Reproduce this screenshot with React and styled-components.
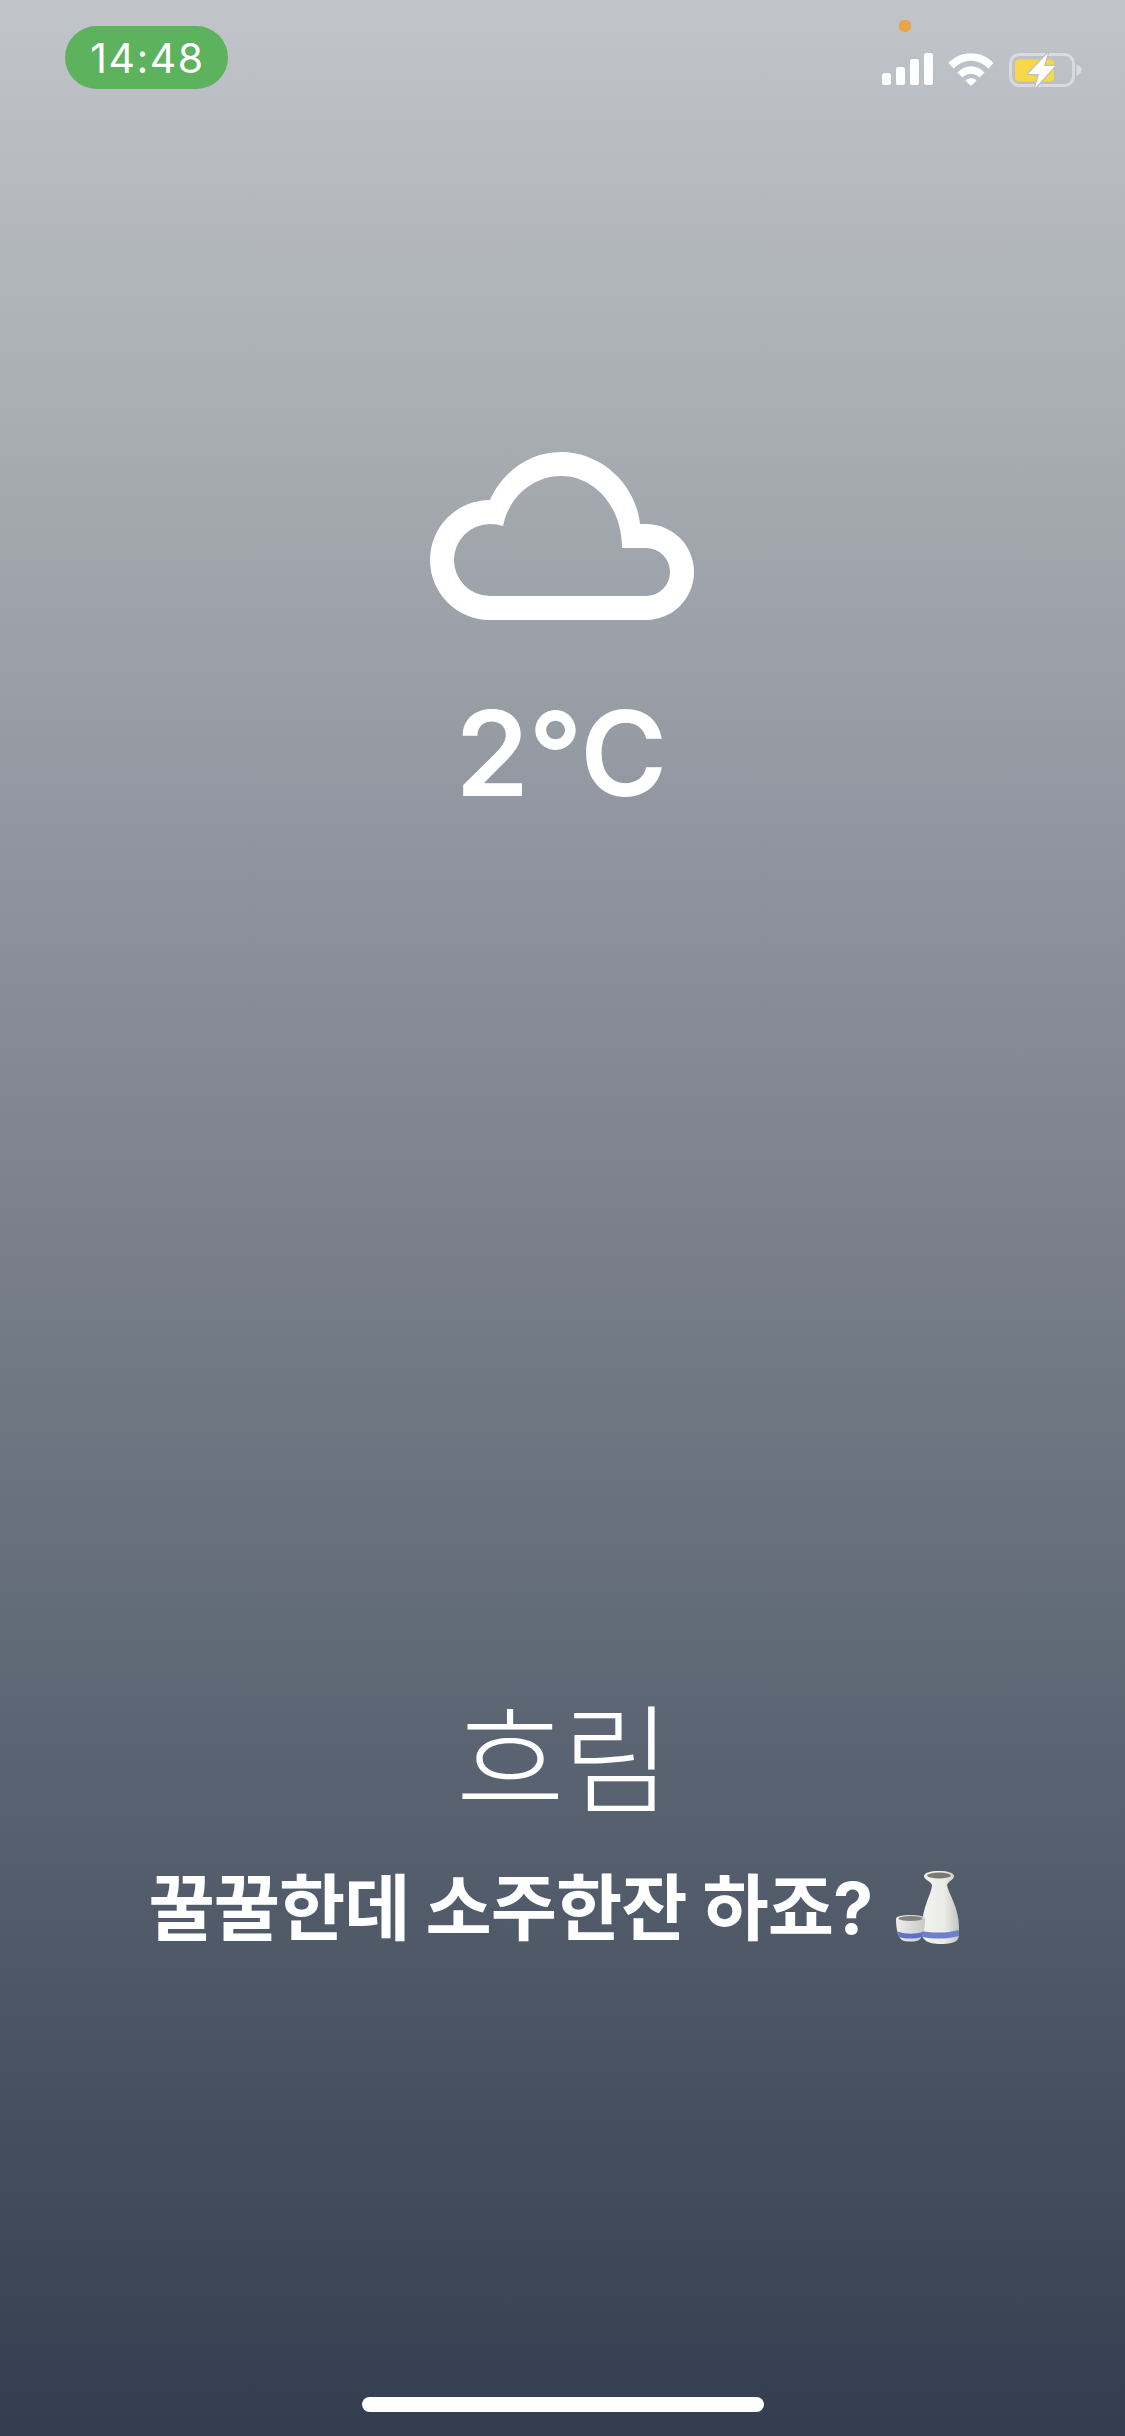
import React from 'react';
import styled, { createGlobalStyle } from 'styled-components';

const GlobalStyle = createGlobalStyle`
  html, body {
    margin: 0;
    padding: 0;
  }
  body {
    font-family: 'Inter', 'Noto Sans CJK KR', sans-serif;
  }
`;

const Screen = styled.div`
  width: 1125px;
  height: 2436px;
  overflow: hidden;
  display: flex;
  flex-direction: column;
  align-items: center;
  color: #fff;
  background: linear-gradient(180deg, #c1c4c9 0%, #323e4f 100%);
`;

const StatusBar = styled.div`
  align-self: stretch;
  height: 89px;
  padding: 26px 43px 0 65px;
  box-sizing: border-box;
  display: flex;
  justify-content: space-between;
  flex-shrink: 0;
`;

const TimePill = styled.div`
  width: 163px;
  height: 63px;
  padding-left: 2px;
  box-sizing: border-box;
  border-radius: 32px;
  background: #5cb25d;
  display: flex;
  align-items: center;
  justify-content: center;
  font-size: 41px;
  font-weight: 400;
  letter-spacing: 1.5px;
`;

const StatusIcons = styled.div`
  position: relative;
  display: flex;
  align-items: flex-start;
  gap: 15px;
  padding-top: 27px;
`;

const PrivacyDot = styled.span`
  position: absolute;
  left: 17px;
  top: -6px;
  width: 12px;
  height: 12px;
  border-radius: 5px;
  background: #e5a64a;
`;

const CloudIcon = styled.svg`
  display: block;
  margin-top: 363px;
  flex-shrink: 0;
`;

const Temperature = styled.div`
  margin-top: 62px;
  margin-right: 3px;
  font-size: 118px;
  line-height: 143px;
  font-weight: 600;
  letter-spacing: -0.5px;
`;

const Condition = styled.div`
  margin-top: 853px;
  font-family: 'Noto Sans CJK KR', sans-serif;
  font-size: 118px;
  line-height: 150px;
  font-weight: 300;
  letter-spacing: -2px;
`;

const Message = styled.div`
  margin-top: 30px;
  margin-right: 16px;
  display: flex;
  align-items: center;
  gap: 24px;
  font-family: 'Inter', 'Noto Sans CJK KR', sans-serif;
  font-size: 72px;
  line-height: 100px;
  font-weight: 700;
  letter-spacing: -1px;
`;

const HomeIndicator = styled.div`
  margin-top: auto;
  margin-bottom: 24px;
  width: 402px;
  height: 15px;
  border-radius: 8px;
  background: #fff;
  flex-shrink: 0;
`;

const SignalIcon = () => (
  <svg width="51" height="33" viewBox="0 0 51 33" fill="#fff">
    <rect x="0" y="20" width="9" height="12" rx="2.5" />
    <rect x="14" y="14" width="9" height="18" rx="2.5" />
    <rect x="28" y="6" width="9" height="26" rx="2.5" />
    <rect x="42" y="0" width="9" height="32" rx="2.5" />
  </svg>
);

const WifiIcon = () => (
  <svg width="46" height="33" viewBox="0 0 46 33" fill="#fff">
    <path d="M0.500 10C12.500 -3 33.500 -3 45.500 10L40.500 15.500C29.500 5 16.500 5 5.500 15.500Z" />
    <path d="M9.500 19.500C17.500 11 28.500 11 36.500 19.500L31.500 24.500C26.500 19.500 19.500 19.500 14.500 24.500Z" />
    <path d="M17.500 27.500C20.500 24 25.500 24 28.500 27.500L23 33Z" />
  </svg>
);

const BatteryIcon = () => (
  <svg width="73" height="36" viewBox="0 0 73 36" style={{ marginTop: -1 }}>
    <rect x="1.5" y="2.5" width="63" height="31" rx="9" fill="none" stroke="#fff" strokeOpacity="0.42" strokeWidth="3" />
    <path d="M67.500 12.500C71 13.500 72.500 15.500 72.500 18C72.500 20.500 71 22.500 67.500 23.500Z" fill="#fff" fillOpacity="0.45" />
    <rect x="6" y="7.500" width="39" height="22" rx="4" fill="#f8d748" />
    <path d="M39 1L19 22H30L26 36L46 14H35Z" fill="#fff" stroke="#bcc0c5" strokeWidth="2.500" strokeLinejoin="round" paintOrder="stroke" />
  </svg>
);

const SakeIcon = () => (
  <svg width="64" height="74" viewBox="0 0 64 74" style={{ flexShrink: 0 }}>
    <defs>
      <linearGradient id="bottleBody" x1="0" y1="0" x2="1" y2="0">
        <stop offset="0" stopColor="#f2f2f0" />
        <stop offset="0.6" stopColor="#ebebe8" />
        <stop offset="1" stopColor="#c4c4c0" />
      </linearGradient>
      <linearGradient id="cupBody" x1="0" y1="0" x2="1" y2="0">
        <stop offset="0" stopColor="#eeeeec" />
        <stop offset="1" stopColor="#c8c8c6" />
      </linearGradient>
    </defs>
    <path d="M28 5C28 2 34 0 43 0C52 0 58 2 58 5C58 9 52 10 51 14C52 22 63 36 63 56C63 62 63 66 62 68C60 72 52 73 45 73C38 73 31 72 28 68C26 66 26 62 26 56C26 36 36 22 36 14C35 10 28 9 28 5Z" fill="url(#bottleBody)" />
    <ellipse cx="43" cy="4.500" rx="12" ry="3" fill="#7c7872" />
    <path d="M26.200 60C38 62.500 52 62 63 59V65C52 68 38 68.500 27 66Z" fill="#6f7fd0" />
    <path d="M0 48C0 45 6 44 14.500 44C23 44 29 45 29 48C29 58 27 66 23 69C20 71 9 71 6 69C2 66 0 58 0 48Z" fill="url(#cupBody)" />
    <ellipse cx="14.500" cy="47.500" rx="12" ry="2.600" fill="#85817b" />
    <path d="M1.500 60.500C10 63.500 20 63.500 28 60.500L26 66C19 68 9 68 3.500 66Z" fill="#5f70c8" />
  </svg>
);

export default function App() {
  return (
    <Screen>
      <GlobalStyle />
      <StatusBar>
        <TimePill>14:48</TimePill>
        <StatusIcons>
          <PrivacyDot />
          <SignalIcon />
          <WifiIcon />
          <BatteryIcon />
        </StatusIcons>
      </StatusBar>
      <CloudIcon width="265" height="168" viewBox="0 0 265 168" fill="#fff">
        <path
          fillRule="evenodd"
          d="M60 168H216A48 48 0 0 0 216 72H210C206 33 172 0 131 0C100 0 73 19 60 48A60 60 0 0 0 60 168ZM60 144H216A24 24 0 0 0 216 96H192C192 54 164 24 131 24C104 24 79 44 73 74Q67 72 60 72A36 36 0 0 0 60 144Z"
        />
      </CloudIcon>
      <Temperature>2°C</Temperature>
      <Condition>흐림</Condition>
      <Message>
        <span>꿀꿀한데 소주한잔 하죠?</span>
        <SakeIcon />
      </Message>
      <HomeIndicator />
    </Screen>
  );
}
